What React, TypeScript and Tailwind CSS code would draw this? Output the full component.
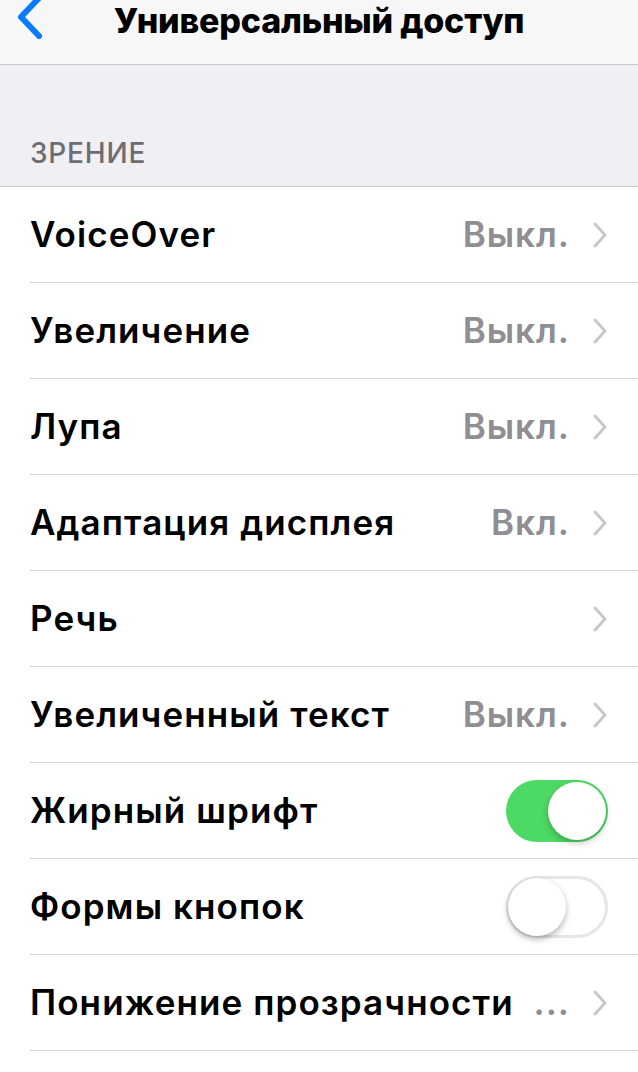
import React from "react";

const font = { fontFamily: "Inter, 'Noto Sans', sans-serif" };

function Chevron() {
  return (
    <svg width="16" height="26" viewBox="0 0 16 26" className="shrink-0">
      <path d="M3 2 L13 13 L3 24" fill="none" stroke="#c7c7cc" strokeWidth="3" strokeLinecap="round" strokeLinejoin="round" />
    </svg>
  );
}

function Toggle({ on }: { on: boolean }) {
  return (
    <div
      className={
        on
          ? "relative w-[102px] h-[62px] rounded-full bg-[#4cd964]"
          : "relative w-[102px] h-[62px] rounded-full bg-white border-[3px] border-[#e5e5ea]"
      }
    >
      <div
        className={
          on
            ? "absolute top-[2px] right-[2px] w-[58px] h-[58px] rounded-full bg-white shadow-[0_3px_6px_rgba(0,0,0,0.25)]"
            : "absolute top-[-1px] left-[-1px] w-[58px] h-[58px] rounded-full bg-white shadow-[0_3px_6px_rgba(0,0,0,0.3)]"
        }
      />
    </div>
  );
}

type Row = { label: string; value?: string; toggle?: boolean; chevron?: boolean };

const rows: Row[] = [
  { label: "VoiceOver", value: "Выкл.", chevron: true },
  { label: "Увеличение", value: "Выкл.", chevron: true },
  { label: "Лупа", value: "Выкл.", chevron: true },
  { label: "Адаптация дисплея", value: "Вкл.", chevron: true },
  { label: "Речь", chevron: true },
  { label: "Увеличенный текст", value: "Выкл.", chevron: true },
  { label: "Жирный шрифт", toggle: true },
  { label: "Формы кнопок", toggle: false },
  { label: "Понижение прозрачности", value: "...", chevron: true },
];

export default function App() {
  return (
    <div className="w-[638px] h-[1072px] overflow-hidden bg-white" style={font}>
      <div className="h-[65px] bg-[#f7f7f7] border-b border-[#c8c7cc] flex items-start relative">
        <svg width="30" height="44" viewBox="0 0 30 44" className="absolute left-[15px] top-[-4px]">
          <path d="M24 2 L6 21 L24 40" fill="none" stroke="#0a7aff" strokeWidth="6" strokeLinecap="round" strokeLinejoin="round" />
        </svg>
        <div className="w-full text-center text-[34px] font-extrabold text-black leading-none pt-[4px] tracking-[-0.2px]">
          Универсальный доступ
        </div>
      </div>
      <div className="h-[122px] bg-[#efeff4] border-b border-[#c8c7cc] flex items-end pl-[30px] pb-[19px]">
        <span className="text-[28px] text-[#6d6d72] font-medium leading-none tracking-[0.8px]">ЗРЕНИЕ</span>
      </div>
      <div className="bg-white">
        {rows.map((r, i) => (
          <div key={i} className="pl-[30px]">
            <div className="h-[96px] border-b border-[#d1d1d6] flex items-center pr-[30px]">
              <span className="flex-1 text-[35px] font-semibold text-black leading-none whitespace-nowrap tracking-[1.1px]">
                {r.label}
              </span>
              {r.value && (
                <span className="text-[35px] font-semibold text-[#8e8e93] leading-none mr-[22px] tracking-[1px]">{r.value}</span>
              )}
              {r.chevron && <Chevron />}
              {r.toggle !== undefined && <Toggle on={r.toggle} />}
            </div>
          </div>
        ))}
      </div>
    </div>
  );
}
